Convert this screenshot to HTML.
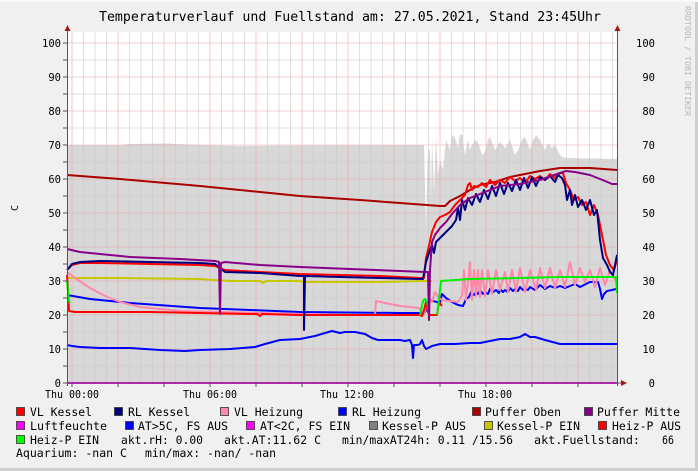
<!DOCTYPE html>
<html><head><meta charset="utf-8"><style>
html,body{margin:0;padding:0;background:#f0f0f0;}
svg{display:block;}
text{font-family:"DejaVu Sans Mono","Liberation Mono",monospace;fill:#000;}
</style></head><body>
<svg width="698" height="471" viewBox="0 0 698 471" xmlns="http://www.w3.org/2000/svg">
<rect x="0" y="0" width="698" height="471" fill="#f0f0f0"/>
<rect x="695" y="0" width="3" height="471" fill="#cfcfcf"/>
<rect x="0" y="468" width="698" height="3" fill="#cfcfcf"/>
<rect x="0" y="0" width="698" height="2" fill="#f8f8f8"/>
<text x="350" y="21" font-size="13" text-anchor="middle" textLength="502" lengthAdjust="spacingAndGlyphs">Temperaturverlauf und Fuellstand am: 27.05.2021, Stand 23:45Uhr</text>
<text transform="translate(685,6) rotate(90)" font-size="8" fill="#b8b8b8" style="fill:#b8b8b8" textLength="110" lengthAdjust="spacingAndGlyphs">RRDTOOL / TOBI OETIKER</text>
<rect x="67" y="32" width="550" height="351" fill="#ffffff"/>
<polygon fill="#d8d8d8" points="67,383 67,145 120,145 130,144 170,143.5 175,144 200,145 240,146 300,145.5 420,145 424,145 426,230 427,180 428,150 430,150 431,200 432,138 434,190 436,137 438,175 440,160 443,170 446,140 450,150 452,135 455,138 458,148 460,135 462,134 465,155 468,140 470,150 472,145 475,140 478,142 482,155 485,152 488,140 490,137 495,150 500,142 505,148 510,140 515,155 518,150 522,140 525,137 530,150 532,142 536,135 540,140 545,150 548,143 552,148 555,145 560,155 562,157 566,158 617,159 617,383"/>
<g stroke="#c8c8c8" stroke-width="0.8" opacity="0.7">
<path d="M83.5,32V383M95,32V383M106.5,32V383M129.5,32V383M141,32V383M152.5,32V383M175.5,32V383M187,32V383M198.5,32V383M221.5,32V383M233,32V383M244.5,32V383M267.5,32V383M279,32V383M290.5,32V383M313.5,32V383M325,32V383M336.5,32V383M359.5,32V383M371,32V383M382.5,32V383M405.5,32V383M417,32V383M428.5,32V383M451.5,32V383M463,32V383M474.5,32V383M497.5,32V383M509,32V383M520.5,32V383M543.5,32V383M555,32V383M566.5,32V383M589.5,32V383M601,32V383M612.5,32V383"/>
<path d="M67,366H617M67,332H617M67,298H617M67,264H617M67,230H617M67,196H617M67,162H617M67,128H617M67,94H617M67,60H617"/>
</g>
<g stroke="#e8a8a8" stroke-width="0.8" opacity="0.7">
<path d="M72,32V383M118,32V383M164,32V383M210,32V383M256,32V383M302,32V383M348,32V383M394,32V383M440,32V383M486,32V383M532,32V383M578,32V383"/>
<path d="M67,349H617M67,315H617M67,281H617M67,247H617M67,213H617M67,179H617M67,145H617M67,111H617M67,77H617M67,43H617"/>
</g>
<g fill="none" stroke-width="2" stroke-linejoin="round">
<polyline stroke="#c8c800" points="67,278 120,278 200,279 230,281 260,281 263,283 266,281 300,281 303,282 380,282 420,281 432,281"/>
<polyline stroke="#0000ff" points="67,295 90,299 130,303 200,308 250,310 300,312 400,313 419,313 422,313 425,312 427,309 430,300 433,301 437,302 440,303 442,294 446,298 452,302 458,305 463,306 466,299 469,297 471,292 474,295 476,292 478,294 480,290 483,294 485,292 488,294 490,289 493,292 496,290 499,293 500,289 503,292 505,290 508,292 510,288 513,291 515,289 518,291 520,287 523,290 525,289 528,290 530,287 535,290 540,285 545,289 550,286 555,288 560,286 565,288 575,284 580,287 590,282 598,282 600,289 602,299 604,294 607,291 612,290 616,289"/>
<polyline stroke="#ff88aa" points="67,272 75,278 90,288 105,296 120,302 140,307 180,311 260,313 300,314 360,315 375,315 376,301 385,303 400,306 419,308 424,314 427,304 430,300 432,302 435,292 438,297 442,300 450,301 458,302 462,296 464,270 466,300 468,282 470,262 472,300 474,270 476,296 478,270 480,297 482,270 485,296 488,270 492,294 496,270 500,290 505,272 508,292 512,270 516,292 520,268 525,292 530,270 536,290 540,268 545,288 550,268 555,288 560,270 565,287 570,262 575,285 580,268 585,282 590,270 595,287 600,268 605,285 610,270 617,283"/>
<polyline stroke="#ff0000" points="67,275 68,290 69,311 75,312 150,312 250,314 257,314 260,316 262,314 300,315 420,315 422,316 424,310 426,302 428,312 430,315 434,315 437,315 439,302 442,306"/>
<polyline stroke="#00ee00" points="67,281 68,291 69,301 70,303"/>
<polyline stroke="#00ee00" points="420,315 423,301 425,299 427,302 429,312"/>
<polyline stroke="#00ee00" points="437,315 439,299 441,281 470,279 520,278 560,277 616,277 617,293"/>
<polyline stroke="#0000ff" points="67,345 72,346 80,347 100,348 130,348 160,350 185,351 200,350 230,349 255,347 265,344 280,340 300,339 315,336 325,333 332,331 340,333 345,332 355,332 365,334 372,338 378,340 385,340 395,340 400,340 405,341 410,340 412,345 413,358 414,345 418,345 420,344 422,340 424,346 426,349 428,348 432,346 440,344 455,344 470,343 480,343 490,341 500,339 510,339 520,337 525,334 530,337 535,337 545,340 560,344 580,344 600,344 617,344"/>
<polyline stroke="#aa0000" points="67,175 120,179 200,186 260,192 300,196 360,200 400,203 440,206 445,206 450,201 460,196 470,190 480,185 495,182 510,177 525,174 540,171 560,168 565,168 590,168 617,170"/>
<polyline stroke="#ff0000" points="67,270 72,265 80,263 100,263 150,264 200,265 215,266 225,270 260,272 300,274 340,275 380,276 420,278 424,278 426,258 428,250 432,232 436,222 440,217 445,215 450,212 455,205 460,200 465,195 468,185 470,183 472,190 474,186 478,187 482,183 486,187 490,180 495,185 500,180 505,183 510,177 515,181 520,178 525,183 530,176 535,179 540,176 545,180 550,174 555,178 560,173 563,173 566,183 570,190 574,200 578,197 582,205 586,202 590,215 594,205 598,215 602,235 606,255 610,265 614,270 617,260"/>
<polyline stroke="#000080" points="67,270 72,264 80,262 100,261 150,262 200,263 215,264 220,268 225,272 260,273 300,276 304,276 304,330 305,276 340,277 380,278 420,279 423,279 426,262 430,250 432,245 434,253 436,242 440,238 446,232 452,226 456,220 458,208 460,220 462,200 465,210 468,198 472,205 476,194 480,202 484,190 488,199 492,186 496,196 500,183 504,194 508,183 512,191 516,180 520,190 524,178 528,188 532,177 536,186 540,177 545,180 550,176 555,182 558,175 562,178 565,185 567,200 570,190 572,205 575,195 578,207 582,200 586,210 590,200 594,215 597,210 600,240 603,258 607,265 610,272 613,275 616,260 617,255"/>
<polyline stroke="#880088" points="67,249 80,252 100,254 130,257 180,259 215,261 219,262 220,314 221,263 225,262 260,265 300,267 350,269 400,271 425,272 428,272 429,320 430,270 432,242 435,235 440,228 446,222 452,214 460,205 470,198 480,194 490,190 500,186 520,184 540,180 560,173 566,171 575,172 590,175 605,181 612,184 617,184"/>
<polyline stroke="#ff00ff" points="67,383 617,383"/>
</g>
<g stroke="#555" stroke-width="1">
<path d="M67.5,30V386M617.5,30V386M63,383H622"/>
<path d="M63,366H67M63,349H67M63,332H67M63,315H67M63,298H67M63,281H67M63,264H67M63,247H67M63,230H67M63,213H67M63,196H67M63,179H67M63,162H67M63,145H67M63,128H67M63,111H67M63,94H67M63,77H67M63,60H67M63,43H67"/>
<path d="M72,383V387M118,383V387M164,383V387M210,383V387M256,383V387M302,383V387M348,383V387M394,383V387M440,383V387M486,383V387M532,383V387M578,383V387"/>
</g>
<g fill="#a01818">
<polygon points="64.5,31 67.5,25 70.5,31"/>
<polygon points="614.5,31 617.5,25 620.5,31"/>
<polygon points="621,380 627,383 621,386"/>
</g>
<g font-size="10.5" text-anchor="end">
<text x="61" y="47">100</text><text x="61" y="81">90</text><text x="61" y="115">80</text><text x="61" y="149">70</text><text x="61" y="183">60</text><text x="61" y="217">50</text><text x="61" y="251">40</text><text x="61" y="285">30</text><text x="61" y="319">20</text><text x="61" y="353">10</text><text x="61" y="387">0</text>
<text x="655" y="47">100</text><text x="655" y="81">90</text><text x="655" y="115">80</text><text x="655" y="149">70</text><text x="655" y="183">60</text><text x="655" y="217">50</text><text x="655" y="251">40</text><text x="655" y="285">30</text><text x="655" y="319">20</text><text x="655" y="353">10</text><text x="655" y="387">0</text>
</g>
<text transform="translate(18,208) rotate(-90)" font-size="10" text-anchor="middle">C</text>
<g font-size="10.5" text-anchor="middle">
<text x="72" y="398" textLength="54" lengthAdjust="spacingAndGlyphs">Thu 00:00</text><text x="210" y="398" textLength="54" lengthAdjust="spacingAndGlyphs">Thu 06:00</text><text x="347" y="398" textLength="54" lengthAdjust="spacingAndGlyphs">Thu 12:00</text><text x="485" y="398" textLength="54" lengthAdjust="spacingAndGlyphs">Thu 18:00</text>
</g>
<g stroke="#333" stroke-width="0.8">
<rect x="16.5" y="407.5" width="8" height="8" fill="#ff0000"/>
<rect x="114.5" y="407.5" width="8" height="8" fill="#000080"/>
<rect x="220.5" y="407.5" width="8" height="8" fill="#ff88aa"/>
<rect x="338.5" y="407.5" width="8" height="8" fill="#0000ff"/>
<rect x="472.5" y="407.5" width="8" height="8" fill="#aa0000"/>
<rect x="584.5" y="407.5" width="8" height="8" fill="#880088"/>
<rect x="16.5" y="421.5" width="8" height="8" fill="#ff00ff"/>
<rect x="125.5" y="421.5" width="8" height="8" fill="#0000ff"/>
<rect x="246.5" y="421.5" width="8" height="8" fill="#ff00ff"/>
<rect x="369.5" y="421.5" width="8" height="8" fill="#808080"/>
<rect x="484.5" y="421.5" width="8" height="8" fill="#c8c800"/>
<rect x="598.5" y="421.5" width="8" height="8" fill="#ff0000"/>
<rect x="16.5" y="435.5" width="8" height="8" fill="#00ff00"/>
</g>
<g font-size="11.5">
<text x="30" y="416" textLength="62" lengthAdjust="spacingAndGlyphs">VL Kessel</text>
<text x="128" y="416" textLength="62" lengthAdjust="spacingAndGlyphs">RL Kessel</text>
<text x="234" y="416" textLength="69" lengthAdjust="spacingAndGlyphs">VL Heizung</text>
<text x="352" y="416" textLength="69" lengthAdjust="spacingAndGlyphs">RL Heizung</text>
<text x="485" y="416" textLength="76" lengthAdjust="spacingAndGlyphs">Puffer Oben</text>
<text x="597" y="416" textLength="83" lengthAdjust="spacingAndGlyphs">Puffer Mitte</text>
<text x="30" y="430" textLength="77" lengthAdjust="spacingAndGlyphs">Luftfeuchte</text>
<text x="138" y="430" textLength="90" lengthAdjust="spacingAndGlyphs">AT&gt;5C, FS AUS</text>
<text x="260" y="430" textLength="90" lengthAdjust="spacingAndGlyphs">AT&lt;2C, FS EIN</text>
<text x="382" y="430" textLength="84" lengthAdjust="spacingAndGlyphs">Kessel-P AUS</text>
<text x="497" y="430" textLength="83" lengthAdjust="spacingAndGlyphs">Kessel-P EIN</text>
<text x="612" y="430" textLength="69" lengthAdjust="spacingAndGlyphs">Heiz-P AUS</text>
<text x="30" y="444" textLength="69" lengthAdjust="spacingAndGlyphs">Heiz-P EIN</text>
<text x="121" y="444" textLength="82" lengthAdjust="spacingAndGlyphs">akt.rH: 0.00</text>
<text x="224" y="444" textLength="97" lengthAdjust="spacingAndGlyphs">akt.AT:11.62 C</text>
<text x="342" y="444" textLength="171" lengthAdjust="spacingAndGlyphs">min/maxAT24h: 0.11 /15.56</text>
<text x="534" y="444" textLength="106" lengthAdjust="spacingAndGlyphs">akt.Fuellstand:</text>
<text x="662" y="444" textLength="12" lengthAdjust="spacingAndGlyphs">66</text>
<text x="16" y="457" textLength="111" lengthAdjust="spacingAndGlyphs">Aquarium: -nan C</text>
<text x="145" y="457" textLength="131" lengthAdjust="spacingAndGlyphs">min/max: -nan/ -nan</text>
</g>
</svg>
</body></html>
